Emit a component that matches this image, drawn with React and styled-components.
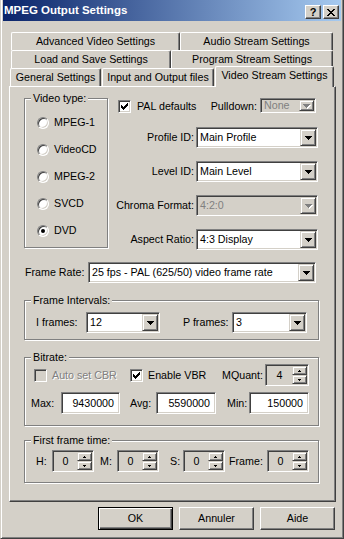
import styled, { createGlobalStyle, css } from "styled-components";

const FACE = "#d4d0c8";

const GlobalStyle = createGlobalStyle`
  html, body {
    margin: 0;
    padding: 0;
    background: ${FACE};
  }
  * {
    box-sizing: border-box;
  }
`;

// win2k bevels
const sunken = css`
  border: 1px solid;
  border-color: #808080 #fff #fff #808080;
  box-shadow: inset 1px 1px #404040, inset -1px -1px ${FACE};
`;

const raised = css`
  border: 1px solid;
  border-color: ${FACE} #404040 #404040 ${FACE};
  box-shadow: inset 1px 1px #fff, inset -1px -1px #808080;
`;

const Window = styled.div`
  width: 344px;
  height: 539px;
  display: flex;
  flex-direction: column;
  background: ${FACE};
  border-left: 1px solid ${FACE};
  border-right: 1px solid #404040;
  border-bottom: 1px solid #404040;
  box-shadow: inset 1px 0 #fff, inset -1px -1px #808080;
  padding: 0 2px 2px;
  font-family: "Liberation Sans", Arial, sans-serif;
  font-size: 10.7px;
  line-height: 13px;
  color: #000;
`;

const TitleBar = styled.div`
  flex: none;
  height: 21px;
  display: flex;
  align-items: center;
  padding: 0 2px 0 1px;
  background: linear-gradient(to right, #0a246a, #a6caf0);
`;

const Title = styled.div`
  flex: 1;
  color: #fff;
  font-weight: bold;
  font-size: 11.5px;
`;

const CaptionButtons = styled.div`
  display: flex;
  gap: 2px;
  align-self: flex-start;
  margin-top: 5px;
`;

const CaptionButton = styled.div`
  width: 16px;
  height: 14px;
  display: flex;
  align-items: center;
  justify-content: center;
  background: ${FACE};
  border: 1px solid;
  border-color: #fff #404040 #404040 #fff;
  box-shadow: inset -1px -1px #808080;
  font-weight: bold;
  font-size: 11px;
  line-height: 11px;
`;

const Body = styled.div`
  flex: 1;
  display: flex;
  flex-direction: column;
  padding: 11px 5px 0 6px;
`;

const TabRow = styled.div`
  flex: none;
  height: 18px;
  display: flex;
  align-items: flex-start;
  padding-left: ${(p) => p.$pad}px;
  gap: ${(p) => p.$gap}px;
`;

const Tab = styled.div`
  flex: none;
  position: relative;
  z-index: ${(p) => (p.$active ? 1 : 0)};
  width: ${(p) => p.$w}px;
  height: ${(p) => (p.$active ? 21 : 18)}px;
  margin-top: ${(p) => (p.$active ? -2 : 0)}px;
  padding-top: 2px;
  text-align: center;
  white-space: nowrap;
  background: ${FACE};
  border-top: 1px solid #fff;
  border-left: 1px solid #fff;
  border-right: 1px solid #404040;
  border-radius: 2px 2px 0 0;
  box-shadow: inset -1px 0 #808080;
`;

const Panel = styled.div`
  flex: none;
  height: 416px;
  display: flex;
  flex-direction: column;
  border-top: 1px solid #fff;
  border-left: 1px solid #fff;
  border-right: 1px solid #404040;
  border-bottom: 1px solid #404040;
  box-shadow: inset -1px -1px #808080;
  padding: 11px 15px 0 14px;
`;

const Group = styled.div`
  position: relative;
  flex: none;
  width: ${(p) => p.$w}px;
  height: ${(p) => p.$h}px;
  margin-top: ${(p) => p.$mt || 0}px;
  padding: ${(p) => p.$pad};
  border: 1px solid #808080;
  box-shadow: inset 1px 1px #fff, 1px 1px #fff;
`;

const GroupLabel = styled.span`
  position: absolute;
  top: -7px;
  left: 6px;
  padding: 0 2px;
  background: ${FACE};
  white-space: nowrap;
`;

const TopSection = styled.div`
  flex: none;
  height: 151px;
  display: flex;
  align-items: flex-start;
`;

const RadioList = styled.div`
  display: flex;
  flex-direction: column;
`;

const RadioRow = styled.div`
  height: 27px;
  display: flex;
  align-items: center;
  gap: 5px;
`;

const RadioDot = styled.span`
  flex: none;
  width: 12px;
  height: 12px;
  border-radius: 50%;
  border: 1px solid;
  border-color: #808080 #fff #fff #808080;
  box-shadow: inset 1px 1px #404040, inset -1px -1px ${FACE};
  background: #fff;
  display: flex;
  align-items: center;
  justify-content: center;
  &::after {
    content: "";
    width: 4px;
    height: 4px;
    border-radius: 50%;
    background: ${(p) => (p.$on ? "#000" : "transparent")};
  }
`;

const RightCol = styled.div`
  width: 200px;
  margin-left: 10px;
  display: flex;
  flex-direction: column;
`;

const PalRow = styled.div`
  height: 17px;
  display: flex;
  align-items: center;
  padding-right: 2px;
`;

const Spacer = styled.div`
  flex: 1;
`;

const Row = styled.div`
  flex: none;
  height: ${(p) => p.$h || 21}px;
  display: flex;
  align-items: center;
  margin-top: ${(p) => p.$mt || 0}px;
  padding-left: ${(p) => p.$pl || 0}px;
`;

const Label = styled.span`
  flex: none;
  width: ${(p) => (p.$w ? `${p.$w}px` : "auto")};
  margin-left: ${(p) => p.$ml || 0}px;
  margin-right: ${(p) => p.$mr || 0}px;
  text-align: ${(p) => (p.$right ? "right" : "left")};
  white-space: nowrap;
  color: ${(p) => (p.$disabled ? "#808080" : "#000")};
  text-shadow: ${(p) => (p.$disabled ? "1px 1px #fff" : "none")};
`;

const CheckItem = styled.div`
  flex: none;
  width: ${(p) => p.$w}px;
  display: flex;
  align-items: center;
  gap: ${(p) => p.$gap || 5}px;
`;

const CheckBox = styled.span`
  flex: none;
  width: 13px;
  height: 13px;
  ${sunken};
  background: ${(p) => (p.$disabled ? FACE : "#fff")};
  display: flex;
  align-items: center;
  justify-content: center;
`;

const ComboBox = styled.div`
  flex: none;
  width: ${(p) => p.$w}px;
  height: ${(p) => p.$h || 21}px;
  margin-left: ${(p) => p.$ml || 0}px;
  align-self: ${(p) => p.$self || "auto"};
  ${sunken};
  padding: 1px;
  display: flex;
  background: ${(p) => (p.$disabled ? FACE : "#fff")};
`;

const ComboText = styled.div`
  flex: 1;
  display: flex;
  align-items: center;
  padding-left: 2px;
  white-space: nowrap;
  overflow: hidden;
  color: ${(p) => (p.$disabled ? "#808080" : "#000")};
`;

const DropButton = styled.div`
  flex: none;
  width: ${(p) => p.$w || 16}px;
  ${raised};
  background: ${FACE};
  display: flex;
  align-items: center;
  justify-content: center;
`;

const EditBox = styled.div`
  flex: none;
  width: ${(p) => p.$w}px;
  height: 22px;
  ${sunken};
  background: #fff;
  display: flex;
  align-items: center;
  justify-content: flex-end;
  padding-right: 5px;
`;

const SpinBox = styled.div`
  flex: none;
  width: ${(p) => p.$w}px;
  height: 22px;
  ${sunken};
  padding: 1px;
  background: ${FACE};
  display: flex;
`;

const SpinText = styled.div`
  flex: 1;
  display: flex;
  align-items: center;
  justify-content: center;
`;

const SpinButtons = styled.div`
  flex: none;
  width: 15px;
  display: flex;
  flex-direction: column;
`;

const SpinButton = styled.div`
  flex: 1;
  ${raised};
  background: ${FACE};
  display: flex;
  align-items: center;
  justify-content: center;
`;

const ButtonRow = styled.div`
  flex: none;
  display: flex;
  justify-content: flex-end;
  gap: 6px;
  margin-top: 5px;
  padding-right: 1px;
`;

const Button = styled.div`
  width: 75px;
  height: 23px;
  display: flex;
  align-items: center;
  justify-content: center;
  background: ${FACE};
  border: 1px solid;
  ${(p) =>
    p.$default
      ? css`
          border-color: #000;
          box-shadow: inset 1px 1px #fff, inset -1px -1px #404040,
            inset -2px -2px #808080;
        `
      : css`
          border-color: #fff #404040 #404040 #fff;
          box-shadow: inset -1px -1px #808080;
        `}
`;

const CloseGlyph = () => (
  <svg width="8" height="7" viewBox="0 0 8 7" shapeRendering="crispEdges">
    <path
      d="M0 0h2v1H0z M6 0h2v1H6z M1 1h2v1H1z M5 1h2v1H5z M2 2h4v1H2z M3 3h2v1H3z M2 4h4v1H2z M1 5h2v1H1z M5 5h2v1H5z M0 6h2v1H0z M6 6h2v1H6z"
      fill="#000"
    />
  </svg>
);

const CheckMark = () => (
  <svg width="7" height="7" viewBox="0 0 7 7" shapeRendering="crispEdges">
    <path
      d="M0 2h1v3H0z M1 3h1v3H1z M2 4h1v3H2z M3 3h1v3H3z M4 2h1v3H4z M5 1h1v3H5z M6 0h1v3H6z"
      fill="#000"
    />
  </svg>
);

const DownArrow = ({ disabled }) => (
  <svg
    width="7"
    height="4"
    viewBox="0 0 7 4"
    shapeRendering="crispEdges"
    style={disabled ? { filter: "drop-shadow(1px 1px 0 #fff)" } : undefined}
  >
    <path d="M0 0h7v1H6v1H5v1H4v1H3V3H2V2H1V1H0z" fill={disabled ? "#808080" : "#000"} />
  </svg>
);

const SmallArrow = ({ up }) => (
  <svg width="3" height="2" viewBox="0 0 3 2" shapeRendering="crispEdges">
    <path d={up ? "M1 0h1v1h1v1H0V1h1z" : "M0 0h3v1H2v1H1V1H0z"} fill="#000" />
  </svg>
);

function Combo({ value, w, h, ml, self, disabled, btn }) {
  return (
    <ComboBox $w={w} $h={h} $ml={ml} $self={self} $disabled={disabled}>
      <ComboText $disabled={disabled}>{value}</ComboText>
      <DropButton $w={btn}>
        <DownArrow disabled={disabled} />
      </DropButton>
    </ComboBox>
  );
}

function Spinner({ value, w }) {
  return (
    <SpinBox $w={w}>
      <SpinText>{value}</SpinText>
      <SpinButtons>
        <SpinButton>
          <SmallArrow up />
        </SpinButton>
        <SpinButton>
          <SmallArrow />
        </SpinButton>
      </SpinButtons>
    </SpinBox>
  );
}

function Check({ label, checked, disabled, w, gap }) {
  return (
    <CheckItem $w={w} $gap={gap}>
      <CheckBox $disabled={disabled}>{checked && <CheckMark />}</CheckBox>
      <Label $disabled={disabled}>{label}</Label>
    </CheckItem>
  );
}

const tabRows = [
  { pad: 2, gap: 0, tabs: [["Advanced Video Settings", 169], ["Audio Stream Settings", 153]] },
  { pad: 2, gap: 0, tabs: [["Load and Save Settings", 160], ["Program Stream Settings", 162]] },
  {
    pad: 1,
    gap: 1,
    tabs: [["General Settings", 91], ["Input and Output files", 112], ["Video Stream Settings", 119, true]],
  },
];

const videoTypes = ["MPEG-1", "VideoCD", "MPEG-2", "SVCD", "DVD"];

const fields = [
  { label: "Profile ID:", value: "Main Profile" },
  { label: "Level ID:", value: "Main Level" },
  { label: "Chroma Format:", value: "4:2:0", disabled: true },
  { label: "Aspect Ratio:", value: "4:3 Display" },
];

export default function App() {
  return (
    <>
      <GlobalStyle />
      <Window>
        <TitleBar>
          <Title>MPEG Output Settings</Title>
          <CaptionButtons>
            <CaptionButton>?</CaptionButton>
            <CaptionButton>
              <CloseGlyph />
            </CaptionButton>
          </CaptionButtons>
        </TitleBar>

        <Body>
          {tabRows.map((row, i) => (
            <TabRow key={i} $pad={row.pad} $gap={row.gap}>
              {row.tabs.map(([name, w, active]) => (
                <Tab key={name} $w={w} $active={active}>
                  {name}
                </Tab>
              ))}
            </TabRow>
          ))}

          <Panel>
            {/* video type + profile settings */}
            <TopSection>
              <Group $w={84} $h={150} $pad="10px 0 0 12px">
                <GroupLabel>Video type:</GroupLabel>
                <RadioList>
                  {videoTypes.map((t) => (
                    <RadioRow key={t}>
                      <RadioDot $on={t === "DVD"} />
                      <span>{t}</span>
                    </RadioRow>
                  ))}
                </RadioList>
              </Group>

              <RightCol>
                <PalRow>
                  <Check label="PAL defaults" checked w={90} gap={6} />
                  <Spacer />
                  <Label $mr={3}>Pulldown:</Label>
                  <Combo value="None" w={56} h={15} btn={15} self="flex-start" disabled />
                </PalRow>
                {fields.map((f, i) => (
                  <Row key={f.label} $mt={i === 0 ? 12 : 13}>
                    <Label $w={80} $ml={-4} $right $mr={2}>
                      {f.label}
                    </Label>
                    <Combo value={f.value} w={122} disabled={f.disabled} />
                  </Row>
                ))}
              </RightCol>
            </TopSection>

            <Row $mt={13} $pl={1}>
              <Label $w={63}>Frame Rate:</Label>
              <Combo value="25 fps - PAL (625/50) video frame rate" w={228} />
            </Row>

            <Group $w={295} $h={40} $mt={17} $pad="11px 0 0 11px">
              <GroupLabel>Frame Intervals:</GroupLabel>
              <Row>
                <Label $w={50}>I frames:</Label>
                <Combo value="12" w={74} />
                <Label $w={49} $ml={23}>
                  P frames:
                </Label>
                <Combo value="3" w={75} />
              </Row>
            </Group>

            <Group $w={295} $h={69} $mt={17} $pad="6px 0 0 6px">
              <GroupLabel>Bitrate:</GroupLabel>
              <Row $h={22} $pl={3}>
                <Check label="Auto set CBR" disabled w={96} />
                <Check label="Enable VBR" checked w={92} />
                <Label $w={43}>MQuant:</Label>
                <Spinner value="4" w={44} />
              </Row>
              <Row $h={22} $mt={6}>
                <Label $w={30}>Max:</Label>
                <EditBox $w={59}>9430000</EditBox>
                <Label $w={26} $ml={10}>
                  Avg:
                </Label>
                <EditBox $w={60}>5590000</EditBox>
                <Label $w={22} $ml={11}>
                  Min:
                </Label>
                <EditBox $w={60}>150000</EditBox>
              </Row>
            </Group>

            <Group $w={295} $h={43} $mt={14} $pad="9px 0 0 11px">
              <GroupLabel>First frame time:</GroupLabel>
              <Row $h={22}>
                <Label $w={16}>H:</Label>
                <Spinner value="0" w={42} />
                <Label $w={17} $ml={6}>
                  M:
                </Label>
                <Spinner value="0" w={42} />
                <Label $w={13} $ml={11}>
                  S:
                </Label>
                <Spinner value="0" w={42} />
                <Label $w={38} $ml={4}>
                  Frame:
                </Label>
                <Spinner value="0" w={42} />
              </Row>
            </Group>
          </Panel>

          <ButtonRow>
            <Button $default>OK</Button>
            <Button>Annuler</Button>
            <Button>Aide</Button>
          </ButtonRow>
        </Body>
      </Window>
    </>
  );
}
